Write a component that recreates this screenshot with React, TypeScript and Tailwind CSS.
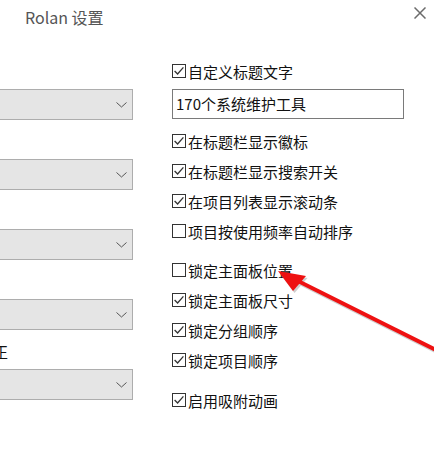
const font = { fontFamily: '"Noto Sans CJK SC", "Noto Sans", sans-serif' }

type Row = { label: string; checked: boolean }

const groupA: Row[] = [
  { label: '在标题栏显示徽标', checked: true },
  { label: '在标题栏显示搜索开关', checked: true },
  { label: '在项目列表显示滚动条', checked: true },
  { label: '项目按使用频率自动排序', checked: false },
]

const groupB: Row[] = [
  { label: '锁定主面板位置', checked: false },
  { label: '锁定主面板尺寸', checked: true },
  { label: '锁定分组顺序', checked: true },
  { label: '锁定项目顺序', checked: true },
]

function CheckBox({ checked }: { checked: boolean }) {
  return (
    <span className="flex h-[14px] w-[14px] shrink-0 items-center justify-center border border-[#333] bg-white">
      {checked && (
        <svg width="12" height="12" viewBox="0 0 12 12">
          <path d="M1.6 6 L4.6 9 L10.4 2.4" fill="none" stroke="#333" strokeWidth="1.3" />
        </svg>
      )}
    </span>
  )
}

function CheckRow({ label, checked }: Row) {
  return (
    <div className="flex h-[30px] items-center gap-[2px]">
      <CheckBox checked={checked} />
      <span className="text-[15px] leading-none text-[#111]">{label}</span>
    </div>
  )
}

function Dropdown() {
  return (
    <div className="flex h-[31px] w-[133px] items-center justify-end border-y border-r border-[#adadad] bg-[#e5e5e5] pr-[5px]">
      <svg width="11" height="6" viewBox="0 0 11 6">
        <path d="M0.5 0.5 L5.5 5 L10.5 0.5" fill="none" stroke="#555" strokeWidth="1" />
      </svg>
    </div>
  )
}

export default function App() {
  return (
    <div className="relative h-[470px] w-[434px] overflow-hidden bg-white" style={font}>
      <div className="flex h-[50px] items-start justify-between">
        <span className="pl-[25px] pt-[5px] text-[16px] text-[#555]">Rolan 设置</span>
        <svg className="mr-[8px] mt-[7px]" width="12" height="12" viewBox="0 0 12 12">
          <path d="M0.5 0.5 L11.5 11.5 M11.5 0.5 L0.5 11.5" stroke="#6b6b6b" strokeWidth="1.5" />
        </svg>
      </div>

      <div className="flex">
        <div className="flex w-[133px] flex-col">
          {[0, 1, 2, 3, 4].map(i => (
            <div key={i} className="flex flex-col">
              <div className="flex h-[39px] items-end pb-[10px]">
                {i === 4 && <span className="-ml-[7px] text-[15px] leading-none text-[#111]">正</span>}
              </div>
              <Dropdown />
            </div>
          ))}
        </div>

        <div className="ml-[39px] flex w-[232px] flex-col pt-[6px]">
          <CheckRow label="自定义标题文字" checked />
          <div className="mt-[3px] flex h-[30px] items-center border border-[#7a7a7a] bg-white pl-[3px] text-[15px] text-[#111]">
            170个系统维护工具
          </div>
          <div className="mt-[7px]">
            {groupA.map(r => <CheckRow key={r.label} {...r} />)}
          </div>
          <div className="mt-[9px]">
            {groupB.map(r => <CheckRow key={r.label} {...r} />)}
          </div>
          <div className="mt-[10px]">
            <CheckRow label="启用吸附动画" checked />
          </div>
        </div>
      </div>

      <svg className="pointer-events-none absolute left-0 top-0" width="434" height="470" viewBox="0 0 434 470">
        <g transform="translate(1.5,2)" opacity="0.35">
          <line x1="296" y1="280" x2="440" y2="352" stroke="#777" strokeWidth="4" />
          <polygon points="278,271 306,276 293,291" fill="#777" />
        </g>
        <line x1="296" y1="280" x2="440" y2="352" stroke="#ee1111" strokeWidth="4" />
        <polygon points="278,271 306,276 293,291" fill="#ee1111" />
      </svg>
    </div>
  )
}
